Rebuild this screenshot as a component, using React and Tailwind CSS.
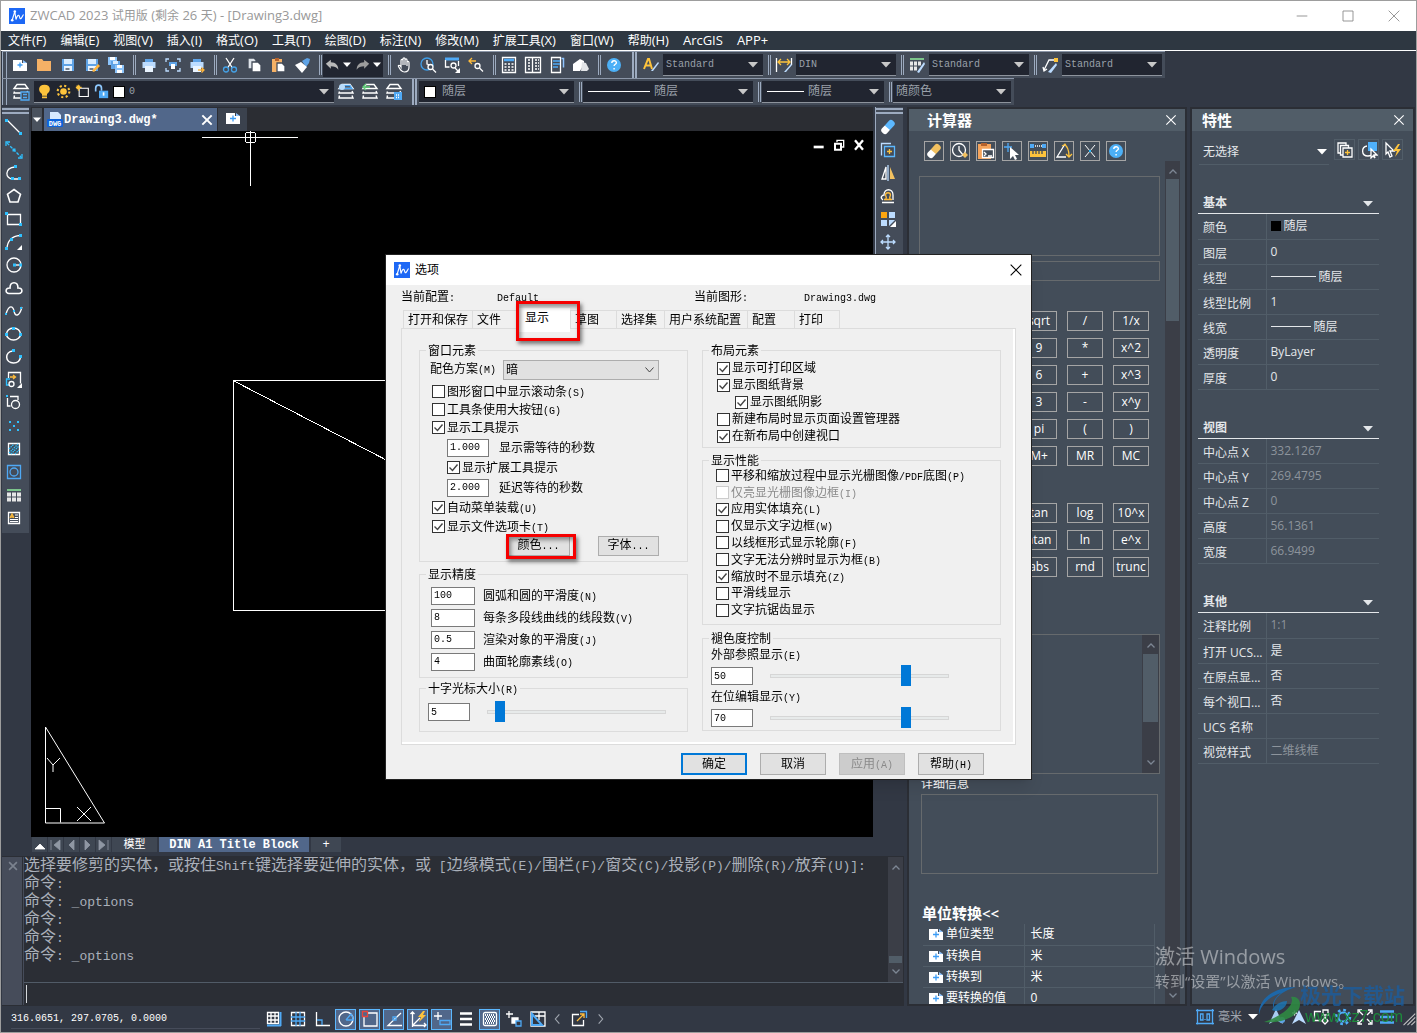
import React from "react";

const SONG = "font-['Liberation_Mono','Noto_Sans_CJK_SC',monospace]";
const UI = "font-['Open_Sans','Noto_Sans_CJK_SC',sans-serif]";

// Mixed text: latin runs get their own size next to the Chinese characters
const Song = ({ text, latin = "text-[10px]" }) =>
  text.split(/([\x20-\x7e]+)/).map((part, i) =>
    i % 2 ? (
      <span key={i} className={`whitespace-pre ${latin}`}>
        {part}
      </span>
    ) : (
      part
    )
  );

const Svg = ({ size = 18, children, className = "" }) => (
  <svg
    width={size}
    height={size}
    viewBox="0 0 18 18"
    fill="none"
    stroke="#fff"
    strokeWidth="1.3"
    className={`block shrink-0 ${className}`}
    aria-hidden="true"
  >
    {children}
  </svg>
);

const Caret = ({ className = "text-[#c8c8c8]" }) => (
  <svg width="10" height="6" viewBox="0 0 10 6" className={`shrink-0 pointer-events-none ${className}`} aria-hidden="true">
    <path d="M0 0h10L5 5.5z" fill="currentColor" />
  </svg>
);

const AppLogo = () => (
  <svg width="16" height="16" viewBox="0 0 16 16" className="shrink-0" aria-hidden="true">
    <rect width="16" height="16" fill="#1d68f5" />
    <path d="M3.200 12 5.800 3.500 7 11.500C8 8 9.500 6 10.200 8s.8 3.500 1.800 2.500 1.500-2.500 2.500-4" stroke="#fff" strokeWidth="1.100" fill="none" />
    <circle cx="5.800" cy="3.500" r="1.300" fill="#fff" />
    <circle cx="3.200" cy="12.200" r="1.300" fill="#fff" />
  </svg>
);

const PlusDoc = () => (
  <Svg>
    <path d="M2 4h9v3h5v8H2z" fill="#fff" stroke="none" />
    <path d="M12 4l4 3h-4z" fill="#8fc4ff" stroke="none" />
    <path d="M9 6.500v6M6 9.500h6" stroke="#3c9cf5" />
  </Svg>
);

const floppy = (
  <>
    <path d="M3 3h12v12H3z" fill="#5fa3e6" stroke="none" />
    <path d="M5 3h8v5H5z" fill="#d8ecff" stroke="none" />
    <path d="M5 10h8v5H5z" fill="#e9f4ff" stroke="none" />
    <path d="M6.500 13h4" stroke="#35404e" />
  </>
);

const printer = (
  <>
    <path d="M5 3h8v4H5z" fill="#5fa3e6" stroke="none" />
    <path d="M2.500 6h13v6h-13z" fill="#bcdcff" stroke="none" />
    <path d="M5 10h8v6H5z" fill="#e9f4ff" stroke="none" />
  </>
);

const layers = <path d="M5 1.500h8l3 4H2zM2.500 8.500 2 10h14l-1-2M2.500 12.500 2 15h14l-1-2.500" strokeWidth="1.400" />;

const fileIcons = [
  [
    "新建",
    <g key="a">
      <path d="M2 4h9v3h5v8H2z" fill="#fff" stroke="none" /><path d="M12 4l4 3h-4z" fill="#8fc4ff" stroke="none" />
      <path d="M9 6.500v5M6.500 9h5" stroke="#3c9cf5" />
    </g>,
  ],
  ["打开", <path key="a" d="M2 3h5l1.500 2H16v10H2z" fill="#f5b166" stroke="none" />],
  ["保存", floppy],
  ["另存为", <g key="a">{floppy}<path d="M9 15l6-7 2 2-6 6z" fill="#ffb53c" stroke="none" /></g>],
  [
    "全部保存",
    <g key="a" stroke="none">
      <path d="M1 1h9v8H1z" fill="#8cc4fb" /><path d="M3 1h5v3H3z" fill="#fff" />
      <path d="M4 5h9v8H4z" fill="#5fa3e6" /><path d="M6 5h5v3H6z" fill="#d8ecff" />
      <path d="M8 9h9v8H8z" fill="#8cc4fb" /><path d="M10 9h5v3h-5zM10 14h5v3h-5z" fill="#fff" />
    </g>,
  ],
];

const printIcons = [
  ["打印", printer],
  [
    "打印预览",
    <g key="a">
      <path d="M2 6V3h3M13 3h3v3M16 12v3h-3M5 15H2v-3" stroke="#bcdcff" />
      <path d="M5 6h8v4H5z" fill="#5fa3e6" stroke="none" /><path d="M7 8h4v5H7z" fill="#fff" stroke="none" />
    </g>,
  ],
  ["发布", <g key="a">{printer}<path d="M10 14h6M13.500 11.500 16 14l-2.500 2.500" stroke="#ffb53c" /></g>],
];

const editIcons = [
  [
    "剪切",
    <g key="a">
      <path d="M5 2l6.500 10M13 2 6.500 12" /><circle cx="5" cy="13.500" r="2.500" stroke="#45a3e8" /><circle cx="13" cy="13.500" r="2.500" stroke="#45a3e8" />
    </g>,
  ],
  ["复制", <g key="a"><path d="M3 2h6l2 2v9H3z" fill="#dfe4ea" stroke="#444c59" /><path d="M7 6h6l3 3v7H7z" fill="#fff" stroke="#444c59" /></g>],
  ["粘贴", <g key="a"><path d="M3 3h10v13H3z" fill="#f5b166" stroke="none" /><path d="M6 2h4v3H6z" fill="#b5622d" stroke="none" /><path d="M8 7h5l3 3v6H8z" fill="#fff" stroke="#444c59" /></g>],
  ["特性匹配", <g key="a" stroke="none"><path d="M9 5l5-3 3 1-1 4-3 4z" fill="#5fa3e6" /><path d="M2 9l6-3 6 5-5 6z" fill="#fff" /></g>],
];

const viewIcons = [
  [
    "平移",
    <path key="a" d="M6 11V4.500c0-1.500 2-1.500 2 0V9V3c0-1.500 2-1.500 2 0v6V4c0-1.500 2-1.500 2 0v6-3.500c0-1.500 2-1.500 2 0V11c0 3-1.500 5-4.500 5-3 0-4-2-6-5.500C3 9 4.500 8.500 6 11z" strokeWidth="1.200" />,
  ],
  ["实时缩放", <g key="a"><circle cx="8" cy="8" r="6" stroke="#3f9ee8" /><path d="M8 4v4l3 1" /><circle cx="11.500" cy="11" r="2.500" fill="#444c59" /><path d="m13.500 13 3.500 3.500" /></g>],
  ["窗口缩放", <g key="a"><path d="M2 3h14" stroke="#4fa9f5" strokeWidth="3" /><path d="M2.500 4v7h4M15.500 5v5" /><circle cx="10.500" cy="9.500" r="2.500" /><path d="m12 12 3 3" /><path d="M17 12v5h-5z" fill="#fff" stroke="none" /></g>],
  ["缩放上一个", <g key="a"><path d="M2 5h7M5 2 2 5l3 3" stroke="#fdbb3c" /><circle cx="10.500" cy="10" r="2.500" /><path d="m12.500 12 3.500 3.500" /></g>],
];

const paletteIcons = [
  ["计算器", <g key="a"><path d="M2.500 1.500h13v15h-13z" /><path d="M4 4h10" stroke="#4fa9f5" strokeWidth="2.500" /><path d="M4.500 8h9M4.500 11h9M4.500 14h9" strokeDasharray="2 1.500" /></g>],
  ["设计中心", <g key="a"><path d="M1.500 1.500h15v15h-15zM8.500 2v14" /><path d="M4 4h3M4 7h3M4 10h3M4 13h3M11 4h4M11 7h4M11 10h4M11 13h4" strokeDasharray="2 1" /></g>],
  ["工具选项板", <g key="a"><path d="M3.500 1.500h9v15h-9z" /><path d="M5 5h7M5 8h7M5 11h5" stroke="#4fa9f5" /><path d="M13.500 2.500h2v9" stroke="#8fc4ff" strokeWidth="1.500" /></g>],
  ["清理", <g key="a" stroke="none"><path d="M1 8 8 3l4 2v3l-4 7H1z" fill="#fff" /><path d="M10 6l4 1 3 6-2 2H9z" fill="#e3e5e8" /></g>],
];

const help = (
  <>
    <circle cx="9" cy="9" r="7" fill="#4cb0f7" stroke="none" />
    <path d="M6.800 7c0-3 4.600-3 4.600-.3 0 1.600-2.300 1.600-2.300 3.300M9.100 12v1.500" strokeWidth="1.400" />
  </>
);

const sq = "#2fc1ff";
const Dot = ({ x, y, fill = sq, s = 3 }) => <rect x={x} y={y} width={s} height={s} fill={fill} stroke="none" />;

const drawIcons = [
  ["直线", <g key="a"><path d="m2 2 14 14" /><Dot x="0" y="1" /><Dot x="14" y="14" /></g>],
  ["构造线", <g key="a"><path d="m2 2 14 14" stroke={sq} strokeDasharray="3 1.500" /><path d="M1 5V1h4M17 13v4h-4" stroke={sq} /><Dot x="7.500" y="7.500" /></g>],
  ["多段线", <g key="a"><path d="M10 3C-1 4 0 15 8 15h6" /><Dot x="9" y="1" /><Dot x="13" y="13" /><Dot x="6" y="13" /></g>],
  ["正多边形", <path key="a" d="m9 2.500 6.500 4.700L13 15H5L2.500 7.200z" strokeWidth="1.600" />],
  ["矩形", <g key="a"><path d="M2.500 4.500h13v10h-13z" /><Dot x="0" y="2" /><Dot x="14" y="13" /></g>],
  ["圆弧", <g key="a"><path d="M2 16C2 8 7 3 15 2.500" /><Dot x="14" y="1" /><Dot x="5" y="5" /><Dot x="0" y="14" /><path d="M17 12v5h-5z" fill="#fff" stroke="none" /></g>],
  ["圆", <g key="a"><circle cx="9" cy="9" r="7" /><path d="M9 9h6" /><Dot x="8" y="7.500" /><Dot x="14" y="7.500" /></g>],
  ["修订云线", <path key="a" d="M4 14.500c-4 0-4-6 1-5.500 0-7 8-7 8 0 5-.5 5 5.500 1 5.500z" strokeWidth="1.600" />],
  ["样条曲线", <g key="a"><path d="M1 12c3-10 7-8 8-3s5 7 8-4" /><Dot x="0" y="11" s={2} /><Dot x="8" y="8" s={2} /><Dot x="15" y="5" s={2} /></g>],
  ["椭圆", <g key="a"><ellipse cx="8.500" cy="9" rx="7" ry="6" strokeWidth="1.500" /><Dot x="7" y="2" /><Dot x="0" y="8" /><Dot x="14" y="8" /></g>],
  ["椭圆弧", <g key="a"><path d="M8 3C-1 4 0 15 8.500 15c4 0 6.500-2 7-6" strokeWidth="1.500" /><Dot x="7" y="1" /><Dot x="14" y="7" /></g>],
  ["插入块", <g key="a"><path d="M3.500 7V1.500h12v11" /><path d="M5 8H1.500v6H5" stroke={sq} /><path d="M5 6h5M8 4l2.500 2L8 8" stroke="#fdbb3c" /><circle cx="6.500" cy="13" r="2.500" /><path d="M17 12v5h-5z" fill="#fff" stroke="none" /></g>],
  ["创建块", <g key="a"><path d="M2.500 4v8h3M5 2.500h8V6" /><circle cx="10.500" cy="10.500" r="4" /><Dot x="1" y="1" s={2} /></g>],
  ["点", <g key="a"><Dot x="4" y="4" s={2} /><Dot x="12" y="4" s={2} /><Dot x="8" y="8" s={2} /><Dot x="4" y="12" s={2} /><Dot x="12" y="12" s={2} /></g>],
  ["图案填充", <g key="a"><path d="M3.500 3.500h11v11h-11z" /><path d="m4 9 5-5M4 13l9-9M6 14l8-8M10 14l4-4" stroke={sq} strokeDasharray="1.500 .8" /></g>],
  ["面域", <g key="a" stroke="#4fa9f5"><path d="M2.500 2.500h13v13h-13z" /><circle cx="9" cy="9" r="4" /></g>],
  ["表格", <g key="a"><path d="M2 4h14" stroke="#7cc48b" strokeWidth="2" /><path d="M2 8.500h14M2 13.500h14" stroke="#e6e6e6" strokeWidth="4" strokeDasharray="4 1" /></g>],
  ["多行文字", <g key="a"><path d="M3.500 3.500h11v11h-11z" /><path d="m5 9 2-4 2 4M5.500 8h3" stroke="#fdbb3c" /><path d="M10 6h3M10 8.500h3M5 10.500h8M5 12.500h8" strokeWidth="1" /></g>],
];

const eraser = (color) => (
  <g stroke="none" transform="rotate(-48 9 9)">
    <rect x="1" y="5.500" width="9" height="7" rx="3" fill="#fff" />
    <path d="M8 5.500h6a3 3 0 0 1 3 3v1a3 3 0 0 1-3 3H8z" fill={color} />
  </g>
);

const modifyIcons = [
  ["删除", eraser("#5cb8ff")],
  ["复制对象", <g key="a" stroke="#5cb8ff"><path d="M12 2.500H2.500v12" stroke="#bcdcff" /><path d="M5.500 5.500h10v10h-10z" /><path d="M10.500 8v5M8 10.500h5" stroke="#fdc33c" /></g>],
  ["镜像", <g key="a"><path d="M7 3v12H3z" /><path d="M9 1v16" stroke="#bcdcff" /><path d="M11 3v12h5z" fill="#f2c160" stroke="none" /></g>],
  ["偏移", <g key="a"><path d="M3 15.500h12M4 13c-4-3 0-5 1-5 0-7 9-7 9 0v5" /><path d="M5 12.500h8M6.500 12c2-1 0-3 0-4 0-3 5-3 5 0 0 1-2 3 0 4" stroke="#fdbb3c" /></g>],
  ["阵列", <g key="a" stroke="none"><path d="M2 2h6v6H2z" fill="#fda50f" /><path d="M10 2h6v6h-6zM2 10h6v6H2z" fill="#bcdcff" /><path d="M10 10h6l-6 6z" fill="#bcdcff" /><path d="M17 11v6h-6z" fill="#fff" /></g>],
  ["移动", <path key="a" d="M9 2v14M2 9h14M7 4l2-2 2 2M7 14l2 2 2-2M4 7 2 9l2 2M14 7l2 2-2 2" stroke="#bcdcff" />],
];

const calcIcons = [
  ["清除", eraser("#f2c160")],
  ["清除历史", <g key="a"><circle cx="8" cy="8" r="6.500" /><path d="M8 4v4l4 5" /><path d="M11 13l3-3 3 3-3 3z" fill="#f2c160" stroke="none" /></g>],
  ["粘贴到命令行", <g key="a"><path d="M1 2h13v15H1z" fill="#f5a45c" stroke="none" /><path d="M4 1h6v3H4z" fill="#b5622d" stroke="none" /><path d="M5.500 7.500h11v8h-11z" fill="#434d59" /><path d="m7 10 2 2-2 2M11 14h4" /></g>],
  ["获取坐标", <g key="a"><path d="M5 1v9M1 5h8" stroke="#4fa9f5" /><path d="m7 5 9 8h-4l2 4-2 1-2-4-3 3z" fill="#fff" stroke="none" /></g>],
  ["距离", <g key="a"><path d="M4 4h10" strokeDasharray="1 1" /><Dot x="1" y="2" fill="#4fa9f5" s={4} /><Dot x="13" y="2" fill="#4fa9f5" s={4} /><path d="M1 9h16v6H1z" fill="#fdc33c" stroke="none" /><path d="M4 12V9M7 12V9M10 12V9M13 12V9" stroke="#434d59" /></g>],
  ["角度", <g key="a"><path d="M10 2 2 15h9" /><path d="M9 2c3 2 5 7 5 12M7 4l4-2M11 12l3 3 3-3" stroke="#fdc33c" /></g>],
  ["交点", <g key="a"><path d="m4 3 10 12M14 3 4 15" strokeWidth="1" /><Dot x="8" y="8" s={2} /></g>],
  ["帮助", help],
];

const keypad = [
  "C", "<--", "sqrt", "/", "1/x",
  "7", "8", "9", "*", "x^2",
  "4", "5", "6", "+", "x^3",
  "1", "2", "3", "-", "x^y",
  "0", ".", "pi", "(", ")",
  "=", "MS", "M+", "MR", "MC",
];
const sciPad = ["sin", "cos", "tan", "log", "10^x", "asin", "acos", "atan", "ln", "e^x", "r2d", "d2r", "abs", "rnd", "trunc"];

const IconButton = ({ label, children, className = "h-6 w-6" }) => (
  <button type="button" aria-label={label} className={`flex shrink-0 items-center justify-center ${className}`}>
    <Svg>{children}</Svg>
  </button>
);

const IconGroup = ({ items }) => items.map(([label, icon]) => <IconButton key={label} label={label}>{icon}</IconButton>);

const Grip = () => <span className="ml-[5px] mr-px h-5 w-[3px] shrink-0 border-x border-[#9dabc0]" />;
const WideGrip = () => <span className="ml-[6px] mr-[2px] h-[26px] w-[5px] shrink-0 border-x-2 border-[#9dabc0]" />;

const Combo = ({ label, value, width, lead, color = "text-[#9aa0aa]", latin }) => (
  <span className={`flex h-[22px] shrink-0 items-center gap-1 border-b border-[#8d939c] bg-[#212530] pl-[3px] pr-[5px] ${width}`}>
    {lead}
    <select aria-label={label} className={`min-w-0 flex-1 appearance-none bg-transparent leading-4 outline-none ${latin ? "text-[10px]" : "text-xs"} ${color}`}>
      <option>{value}</option>
    </select>
    <Caret />
  </span>
);

const menus = ["文件(F)", "编辑(E)", "视图(V)", "插入(I)", "格式(O)", "工具(T)", "绘图(D)", "标注(N)", "修改(M)", "扩展工具(X)", "窗口(W)", "帮助(H)", "ArcGIS", "APP+"];

const Toolbars = () => (
  <div className={SONG}>
    <div className="flex h-[27px] w-fit items-center border-t border-[#8b96a8] bg-[#444c59] pr-[3px]">
      <span className="mr-px h-[26px] w-[5px] shrink-0 border-x border-[#9dabc0]" />
      <IconGroup items={fileIcons} />
      <Grip />
      <IconGroup items={printIcons} />
      <Grip />
      <IconGroup items={editIcons} />
      <Grip />
      <div className="flex h-[23px] w-[60px] items-center justify-around bg-[#212530]">
        <button type="button" aria-label="放弃"><Svg size={15}><path d="M1 7l6-5v3c6 0 9 4 9 9-2-3-5-4-9-4v3z" fill="#b9b9b9" stroke="none" /></Svg></button>
        <Caret className="w-2 text-white" />
        <button type="button" aria-label="重做"><Svg size={15}><path d="m17 7-6-5v3c-6 0-9 4-9 9 2-3 5-4 9-4v3z" fill="#9d9d9d" stroke="none" /></Svg></button>
        <Caret className="w-2 text-white" />
      </div>
      <Grip />
      <IconGroup items={viewIcons} />
      <Grip />
      <IconGroup items={paletteIcons} />
      <Grip />
      <IconButton label="帮助">{help}</IconButton>
      <WideGrip />
      <IconButton label="文字样式"><path d="M2 13 6 3h1l3 10M3.500 9.500h6" stroke="#fdc33c" strokeWidth="2" /><path d="m9 15 7-9 1 1-6 8z" fill="#bcdcff" stroke="none" /></IconButton>
      <Combo label="文字样式" value="Standard" width="w-[100px]" latin />
      <Grip />
      <IconButton label="标注样式"><path d="M1.500 2v14M16.500 2v7" /><path d="M3 6h12M6 3 3 6l3 3M12 3l3 3-3 3" stroke="#fdc33c" /><path d="m9 16 7-8 1 1-6 7z" fill="#bcdcff" stroke="none" /></IconButton>
      <Combo label="标注样式" value="DIN" width="w-[100px]" latin />
      <Grip />
      <IconButton label="表格样式"><path d="M2 3h14" stroke="#7cc48b" strokeWidth="2" /><path d="M2 7.500h12M2 12.500h8" stroke="#e6e6e6" strokeWidth="4" strokeDasharray="3 1" /><path d="m9 16 7-10 1 2-6 9z" fill="#bcdcff" stroke="none" /></IconButton>
      <Combo label="表格样式" value="Standard" width="w-[100px]" latin />
      <Grip />
      <IconButton label="多重引线样式"><path d="M13 4H8L3 14M2 11l1 4 3-2" /><Dot x="13" y="2" s={4} fill="#fdc33c" /><path d="m7 16 8-9 1 2-6 8z" fill="#bcdcff" stroke="none" /></IconButton>
      <Combo label="多重引线样式" value="Standard" width="w-[100px]" latin />
    </div>
    <div className="flex h-[27px] w-fit items-center border-t border-[#8b96a8] bg-[#444c59] pr-[3px]">
      <span className="mr-px h-[26px] w-[5px] shrink-0 border-x border-[#9dabc0]" />
      <IconButton label="图层特性" className="h-6 w-[26px]">{layers}<path d="M9 9h8v8H9z" fill="#444c59" stroke="#4fa9f5" /><path d="M11 11.500h4M11 14.500h4" stroke="#4fa9f5" /></IconButton>
      <Combo
        label="图层"
        value="0"
        latin
        width="w-[300px]"
        lead={
          <>
            <Svg size={15}><path d="M9 1c-8 0-8 8-3 11v2h6v-2c5-3 5-11-3-11zM6 15h6v2H6z" fill="#fdc33c" stroke="none" /></Svg>
            <Svg size={15}><circle cx="9" cy="9" r="4" fill="#fdc33c" stroke="none" /><circle cx="9" cy="9" r="7" stroke="#fdc33c" strokeWidth="2.500" strokeDasharray="2.500 3" /></Svg>
            <Svg size={15}><path d="M5 5h11v10H5z" /><path d="M4 1v7M1 4h7M2 2l4 4M6 2 2 6" stroke="#fdc33c" /></Svg>
            <Svg size={15}><path d="M2 9V5c0-5 7-5 7 0v3" stroke="#8fc9ff" strokeWidth="2" /><path d="M6 8h11v9H6z" fill="#4fa9f5" stroke="none" /><path d="M11.500 10v4" strokeWidth="2" /></Svg>
            <span className="size-3 border border-black bg-white" />
          </>
        }
      />
      <IconButton label="置为当前">{layers}<path d="M5 2.500h8l2 3H3z" stroke="#4fa9f5" /><circle cx="5" cy="4" r="3" fill="#b9dcfb" stroke="none" /></IconButton>
      <IconButton label="上一个图层">{layers}<path d="M2 4h7M5 1 2 4l3 3" stroke="#63d27a" /></IconButton>
      <IconButton label="图层状态">{layers}<path d="M9 9h8v8H9z" fill="#4fa9f5" stroke="none" /><path d="M11 12h4M11 14.500h4" stroke="#fff" strokeDasharray="1 1" /></IconButton>
      <WideGrip />
      <Combo label="颜色" value="随层" width="w-[155px]" lead={<span className="mx-0.5 size-3 border border-black bg-white" />} />
      <Grip />
      <Combo label="线型" value="随层" width="w-[170px]" lead={<span className="ml-0.5 h-px w-[62px] bg-white" />} />
      <Grip />
      <Combo label="线宽" value="随层" width="w-[122px]" lead={<span className="ml-0.5 h-px w-[37px] bg-white" />} />
      <Grip />
      <Combo label="打印样式" value="随颜色" width="w-[118px]" />
    </div>
  </div>
);

const SideTools = ({ items }) => (
  <div className="flex w-[27px] shrink-0 flex-col self-start bg-[#444c59] pb-1">
    <span className="mb-px mt-px h-[6px] w-full shrink-0 border-y-2 border-[#9dabc0]" />
    {items.map(([label, icon]) => (
      <IconButton key={label} label={label} className="h-[23px] w-6">{icon}</IconButton>
    ))}
  </div>
);

const layoutNav = [
  ["展开", "M2 11h10L7 6z", "#fff"],
  ["第一个", "M2 2v10M11 2v10L5 7z", "#8f97a3"],
  ["上一个", "M9 2v10L4 7z", "#8f97a3"],
  ["下一个", "M4 2v10l5-5z", "#8f97a3"],
  ["最后一个", "M11 2v10M2 2v10l6-5z", "#8f97a3"],
];

const Canvas = () => (
  <div className="flex min-w-0 flex-1 flex-col">
    <div className="flex h-6 shrink-0 items-end gap-0.5 bg-[#2b2d33] pl-px">
      <button type="button" aria-label="文件列表" className="flex h-[23px] w-2.5 items-center justify-center bg-[#4a525e]">
        <Caret className="w-2 text-white" />
      </button>
      <div className="flex h-[23px] w-[173px] items-center bg-[#51678a] pl-0.5 pr-1 text-white">
        <Svg>
          <path d="M4 1h8l3 3v12H4z" fill="#d7e9ff" stroke="none" />
          <rect x="1" y="8" width="16" height="8" rx="1" fill="#0d63dc" stroke="none" />
          <text x="9" y="14.500" textAnchor="middle" fontSize="7" fontWeight="bold" fill="#fff" stroke="none">DWG</text>
        </Svg>
        <span className="flex-1 text-xs font-bold">Drawing3.dwg*</span>
        <button type="button" aria-label="关闭"><Svg size={12}><path d="m2 2 14 14M16 2 2 16" strokeWidth="3" /></Svg></button>
      </div>
      <button type="button" aria-label="新建图形" className="-ml-px flex h-[23px] w-[29px] items-center justify-center bg-[#3b424e] pb-1">
        <PlusDoc />
      </button>
    </div>
    <div className="relative min-h-0 flex-1 overflow-hidden bg-black">
      <svg className="absolute inset-0 h-full w-full" fill="none" stroke="#fff" shapeRendering="crispEdges" aria-hidden="true">
        <path d="M171 6.500h96M219.500 0v55" />
        <rect x="214.500" y="1.500" width="10" height="10" rx="2" />
        <path d="M602 249.500H202.500v230H602" />
        <path d="M202 249.500 602 457" />
      </svg>
      <svg className="absolute bottom-3 left-3" width="64" height="100" fill="none" stroke="#fff" aria-hidden="true">
        <path d="M2.500 2v96h59zM2.500 83.500h15v14" />
        <path d="m4 33 6 7 7-7M10 40v7M34 82l14 14M48 82 34 96" />
      </svg>
      <div className="relative flex justify-end gap-2 pr-2 pt-2">
        <button type="button" aria-label="最小化"><Svg size={12}><path d="M1 12h15" strokeWidth="4" /></Svg></button>
        <button type="button" aria-label="还原"><Svg size={12}><path d="M6 5V2h10v10h-3" strokeWidth="2" /><path d="M3 7h9v9H3z" strokeWidth="3" /></Svg></button>
        <button type="button" aria-label="关闭图形"><Svg size={12}><path d="m3 2 12 14M15 2 3 16" strokeWidth="3.500" /></Svg></button>
      </div>
    </div>
    <div className="flex h-[15px] shrink-0 items-stretch pl-px text-white">
      <div className="flex gap-px">
        {layoutNav.map(([label, d, color]) => (
          <button key={label} type="button" aria-label={label} className="flex w-[15px] items-center justify-center bg-[#3f4753]">
            <svg width="14" height="14" aria-hidden="true"><path d={d} fill={color} stroke={color} strokeWidth=".8" /></svg>
          </button>
        ))}
      </div>
      <button type="button" className="ml-px w-[45px] bg-[#3f4753] text-[11px] leading-[14px]">模型</button>
      <button type="button" className="ml-0.5 w-[150px] bg-[#51678a] text-xs font-bold leading-[14px]">DIN A1 Title Block</button>
      <button type="button" className="ml-0.5 w-[30px] bg-[#3f4753] text-xs leading-[14px]">+</button>
    </div>
  </div>
);

const Chevron = ({ up }) => (
  <svg width="8" height="5" viewBox="0 0 8 5" fill="none" stroke="#7d8794" strokeWidth="1.300" className="shrink-0" aria-hidden="true">
    <path d={up ? "M.5 4.500 4 1l3.500 3.500" : "M.5.5 4 4 7.500.5"} />
  </svg>
);

const logLines = [
  "选择要修剪的实体，或按住Shift键选择要延伸的实体，或 [边缘模式(E)/围栏(F)/窗交(C)/投影(P)/删除(R)/放弃(U)]:",
  "命令:",
  "命令: _options",
  "命令:",
  "命令:",
  "命令: _options",
];

const CommandPanel = () => (
  <div className="mt-1 flex h-[150px] shrink-0 border border-l-0 border-[#2b2e35] bg-[#2b2e35] text-[#aab0ba]">
    <div className="w-5 shrink-0 bg-[#464c5a] pl-1.5 pt-1">
      <button type="button" aria-label="关闭命令行" className="block"><Svg size={10}><path d="m2 2 14 14M16 2 2 16" stroke="#7b828e" strokeWidth="3" /></Svg></button>
    </div>
    <div className="ml-px flex min-w-0 flex-1 flex-col border-l border-[#464c5a]">
      <div className="flex h-[126px] border-b border-[#515b67]">
        <div className="min-w-0 flex-1 overflow-hidden whitespace-nowrap text-base leading-[18px]">
          {logLines.map((line, i) => (
            <p key={i} className="h-[18px]"><Song text={line} latin="text-[13px]" /></p>
          ))}
        </div>
        <div className="flex w-[15px] flex-col items-center justify-between bg-[#3b3e47] py-2">
          <Chevron up />
          <span className="mb-1.5 mt-auto h-[7px] w-[13px] bg-[#515d68]" />
          <Chevron />
        </div>
      </div>
      <div className="flex flex-1 items-center pl-0.5">
        <span className="h-[18px] w-px bg-[#d5d8dc]" />
        <input aria-label="命令" className="min-w-0 flex-1 bg-transparent px-1 outline-none" />
      </div>
    </div>
  </div>
);

const PanelHeader = ({ title, pad }) => (
  <div className="flex h-[22px] shrink-0 items-center justify-between bg-[#515d68] pr-2 text-white">
    <h2 className={`text-[15px] font-semibold leading-5 ${pad}`}>{title}</h2>
    <button type="button" aria-label={`关闭${title}`}><Svg size={12}><path d="m2 2 14 14M16 2 2 16" strokeWidth="1.700" /></Svg></button>
  </div>
);

const KeyGrid = ({ keys }) => (
  <div className="grid grid-cols-[repeat(5,36px)] justify-end gap-x-2.5 gap-y-[7px] pr-[11px]">
    {keys.map((k) => (
      <button key={k} type="button" className="h-5 border border-[#a5a5a5] text-xs leading-[18px]">{k}</button>
    ))}
  </div>
);

const units = [
  ["单位类型", "长度"],
  ["转换自", "米"],
  ["转换到", "米"],
  ["要转换的值", "0"],
];

const Calculator = () => (
  <section className="ml-[3px] flex w-[280px] shrink-0 flex-col border-2 border-[#2b2e35] bg-[#434d59] text-white">
    <PanelHeader title="计算器" pad="pl-[18px]" />
    <div className="mt-2.5 flex shrink-0 gap-1.5 pl-[15px]">
      {calcIcons.map(([label, icon]) => (
        <IconButton key={label} label={label} className="size-5 border border-[#a5a5a5]">{icon}</IconButton>
      ))}
    </div>
    <div className="flex min-h-0 flex-1">
      <div className="min-w-0 flex-1 overflow-hidden pl-2.5 pr-[5px]">
        <div className="mt-[15px] h-20 border border-[#666a6d]" />
        <input aria-label="表达式" className="mt-[5px] block h-5 w-full border border-[#666a6d] bg-transparent px-1 text-xs" />
        <div className="mt-[30px]"><KeyGrid keys={keypad} /></div>
        <div className="mt-[37px]"><KeyGrid keys={sciPad} /></div>
        <div className="mt-[57px] flex h-[140px] justify-end border border-[#666a6d]">
          <div className="flex w-[17px] flex-col items-center bg-[#3b3e47] py-2">
            <Chevron up />
            <span className="mt-1.5 h-[68px] w-[15px] shrink-0 bg-[#515d68]" />
            <span className="flex-1" />
            <Chevron />
          </div>
        </div>
        <p className="mt-0.5 pl-0.5 text-xs leading-4">详细信息</p>
        <div className="ml-0.5 mr-0.5 mt-0.5 h-20 border border-[#666a6d]" />
        <h3 className="mt-7 pl-[3px] text-[15px] font-semibold leading-[22px]">单位转换&lt;&lt;</h3>
        <table className="ml-1 w-[232px] table-fixed border-collapse text-xs">
          <tbody>
            {units.map(([name, value]) => (
              <tr key={name} className="h-[21px]">
                <th scope="row" className="w-[101px] border-b border-r border-[#515d68] p-0 pl-1 text-left font-normal leading-4">
                  <span className="flex items-center gap-px"><PlusDoc />{name}</span>
                </th>
                <td className="border-b border-r border-[#515d68] p-0 pl-1.5 leading-4">{value}</td>
              </tr>
            ))}
          </tbody>
        </table>
      </div>
      <div className="mr-[5px] flex w-[15px] shrink-0 flex-col items-center bg-[#3b3e47] pb-1.5 pt-2">
        <Chevron up />
        <span className="mt-[5px] h-[142px] w-[13px] bg-[#515d68]" />
        <span className="flex-1" />
        <Chevron />
      </div>
    </div>
  </section>
);

const Line = ({ width }) => <span className={`h-px bg-[#e4e7ea] ${width}`} />;

const sections = [
  {
    title: "基本",
    rows: [
      ["颜色", "随层", <span key="s" className="size-2.5 bg-black" />],
      ["图层", "0"],
      ["线型", "随层", <Line key="s" width="w-[45px]" />],
      ["线型比例", "1"],
      ["线宽", "随层", <Line key="s" width="w-10" />],
      ["透明度", "ByLayer"],
      ["厚度", "0"],
    ],
  },
  {
    title: "视图",
    muted: true,
    rows: [["中心点 X", "332.1267"], ["中心点 Y", "269.4795"], ["中心点 Z", "0"], ["高度", "56.1361"], ["宽度", "66.9499"]],
  },
  {
    title: "其他",
    rows: [["注释比例", "1:1"], ["打开 UCS...", "是"], ["在原点显...", "否"], ["每个视口...", "否"], ["UCS 名称", ""], ["视觉样式", "二维线框"]],
  },
];
const readOnly = ["1:1", "二维线框"];

const Properties = () => (
  <section className="ml-[3px] mr-px flex w-[225px] shrink-0 flex-col border-2 border-[#2b2e35] bg-[#434d59] text-xs text-[#e4e7ea]">
    <PanelHeader title="特性" pad="pl-2.5" />
    <div className="ml-[7px] mt-2 flex items-start gap-[5px]">
      <label className="flex h-[26px] w-[130px] items-center border-b border-[#515d68] pl-1 pr-0.5">
        <select aria-label="选择对象" className="min-w-0 flex-1 appearance-none bg-transparent outline-none">
          <option>无选择</option>
        </select>
        <Caret className="text-white" />
      </label>
      <div className="flex gap-[3px]">
        <IconButton label="切换选择方式" className="size-[21px] border border-[#515d68]"><path d="M5 12H2V2h8v3M7 14H4.500V4.500h8V7M7 7h9v9H7z" /><path d="M11.500 9v5M9 11.500h5" stroke="#fdc33c" /></IconButton>
        <IconButton label="选择对象" className="size-[21px] border border-[#515d68]"><path d="M8 1h9v9H8z" fill="#4fb0fa" stroke="none" /><path d="M7 5c-6 1-6 10 1 10 3 0 4-1 5-3" /><path d="m11 8 6 6h-3l1 3-2-2-2 2z" fill="#434d59" /></IconButton>
        <IconButton label="快速选择" className="size-[21px] border border-[#515d68]"><path d="m2 2 8 8H6l2 5-2 1-2-5-2 2z" /><path d="m14 3-5 7h4l-2 6 6-8h-4l3-5z" fill="#fdc33c" stroke="none" /></IconButton>
      </div>
    </div>
    {sections.map((s) => (
      <div key={s.title} className="ml-1.5 w-[181px]">
        <h3 className="flex h-[49px] items-end justify-between border-b border-[#e4e7ea] pb-px pl-[5px] pr-1.5 font-bold leading-[18px]">
          {s.title}
          <button type="button" aria-label={`折叠${s.title}`} className="pb-[5px]"><Caret className="text-[#e4e7ea]" /></button>
        </h3>
        <table className="w-full table-fixed border-collapse">
          <tbody>
            {s.rows.map(([name, value, lead]) => (
              <tr key={name} className="h-[25px] border-b border-[#515d68]">
                <th scope="row" className="w-[68px] whitespace-nowrap border-r border-[#515d68] p-0 pl-[5px] pt-1 text-left font-normal leading-5">{name}</th>
                <td className={s.muted || readOnly.includes(value) ? "p-0 pl-1 leading-5 text-[#8d949c]" : "p-0 pl-1 leading-5"}>
                  <span className="flex items-center gap-[3px]">{lead}{value}</span>
                </td>
              </tr>
            ))}
          </tbody>
        </table>
      </div>
    ))}
  </section>
);

const modes = [
  ["捕捉", false, <g key="a"><path d="M2.500 2.500h11v11h-11zM6 2v12M10 2v12M2 6h12M2 10h12" /><path d="M15.500 2v14M2 15.500h14" stroke="#4fa9f5" strokeWidth="2" /></g>],
  ["栅格", false, <g key="a"><path d="M2.500 2.500h13v13h-13z" /><path d="M7 2v14M11 2v14M2 7h14M2 11h14" stroke="#4fa9f5" /></g>],
  ["正交", false, <g key="a"><path d="M3.500 2v13.500H17" /><path d="M4 10h5v5" stroke="#4fa9f5" /></g>],
  ["极轴", true, <g key="a"><circle cx="9" cy="9" r="7" /><path d="M9 10h8M9 10l5-6c2 2 2 4 2 6" stroke="#4fa9f5" /></g>],
  ["对象捕捉", true, <g key="a"><path d="M3 3h13v13H3z" /><path d="M1.500 1.500h5v5h-5z" stroke="#e8443c" fill="#51678a" /></g>],
  ["对象追踪", true, <g key="a"><path d="M16 3 3 15.500h14" /><path d="M8 7h3v3H8z" stroke="#4fa9f5" /></g>],
  ["动态UCS", true, <g key="a"><path d="M3.500 17V2M1.500 4l2-2 2 2M3 15.500h14M15 13l2 2-2 2M4 15l7-7" /><path d="m14 1-5 6h3l-2 5 7-7h-3l2-4z" fill="#fdc33c" stroke="none" /></g>],
  ["动态输入", true, <g key="a"><path d="M5 2v8M1 6h8" /><path d="M7 10.500h10v4H7z" stroke="#4fa9f5" /></g>],
  ["线宽", false, <path key="a" d="M3 3.500h12M3 9h12M3 14.500h12" strokeWidth="2.500" />],
  ["透明度", true, <g key="a"><rect x="2.500" y="2.500" width="13" height="13" rx="1.500" /><path d="M4 5h10M4 9h10M4 13h10" strokeDasharray="1 1" strokeWidth="2" /><path d="M5 7h9M5 11h9" strokeDasharray="1 1" strokeWidth="2" /></g>],
  ["循环选择", false, <g key="a"><path d="M4 1v7M1 4h7" /><path d="M7 8h6v5H7z" fill="#fff" /><path d="M11 11h5v5h-5z" fill="#323844" stroke="#4fa9f5" /></g>],
  ["注释监视器", false, <g key="a"><path d="M2 2h14v14H2zM10 2v8M6 6h10" /><path d="m3 4 10 11H3z" stroke="#4fa9f5" strokeWidth="2" /></g>],
];

const StatusBar = () => (
  <footer className="flex h-[26px] shrink-0 items-center bg-[#323844] text-white">
    <div className="ml-[10px] flex h-full w-[252px] shrink-0 items-center">
      <span className={`h-5 w-[249px] border-b border-[#464c5a] text-[10px] leading-5 ${SONG}`}>316.0651, 297.0705, 0.0000</span>
    </div>
    <div className="flex items-center gap-[3px]">
      {modes.map(([label, on, icon]) => (
        <IconButton key={label} label={label} className={on ? "size-[21px] border border-[#5cb8ff] bg-[#51678a]" : "size-[21px]"}>{icon}</IconButton>
      ))}
    </div>
    <div className="ml-1 flex items-center gap-1.5">
      <Svg size={12}><path d="m11 2-6 7 6 7" stroke="#a0a6af" strokeWidth="1.700" /></Svg>
      <Svg><path d="M9 4.500H2.500v11h11V10" /><path d="M10 1.500h6.500V8" stroke="#4fa9f5" /><path d="m7 11 7-7M10 4h4v4" stroke="#fdbb3c" /></Svg>
      <Svg size={12}><path d="m7 2 6 7-6 7" stroke="#a0a6af" strokeWidth="1.700" /></Svg>
    </div>
    <div className="ml-auto flex items-center gap-1 pb-1">
      <Svg><path d="M1.500 1v15.500M16.500 1v15.500M0 2.500h18M0 15.500h18" stroke="#4fa9f5" /><path d="M4.500 6h2.500v6H4.500zM11 6h2.500v6H11zM9 11v1" stroke="#4fa9f5" /></Svg>
      <span className="text-xs text-[#a0a6af]">毫米</span>
      <Caret className="ml-0.5 mr-1.5 text-white" />
      <Svg><path d="m8 1 7 15-7-4-7 4z" fill="#a9cdf2" stroke="none" /><circle cx="14" cy="12" r="3" fill="#5fa3e6" stroke="none" /></Svg>
      <Svg><path d="m9 2 7 14-7-4-7 4z" fill="#bcdcff" stroke="none" /><path d="M2 5h5M4.500 2.500v5" /></Svg>
      <Svg><path d="M9 12.500H2.500v-9H9M11 2h5v5h-5zM13 9l3 4-3 3-3-3z" /></Svg>
      <Svg><circle cx="9" cy="9" r="4.500" stroke="#4fb0fa" strokeWidth="2" /><circle cx="9" cy="9" r="7" stroke="#4fb0fa" strokeWidth="2.500" strokeDasharray="2.700 2.800" /></Svg>
      <Svg><path d="M2 6V2h4M12 2h4v4M16 12v4h-4M6 16H2v-4M3 3l4 4M15 3l-4 4M3 15l4-4M15 15l-4-4" /></Svg>
      <Svg><path d="M2 3.500h14M2 9h14M2 14.500h14" stroke="#4fa9f5" strokeWidth="2.500" /></Svg>
      <Svg size={14} className="ml-0.5 self-end"><path d="M2 17 17 2M7 17 17 7M12 17l5-5" stroke="#c8c8c8" /></Svg>
    </div>
  </footer>
);

/* ---------- options dialog ---------- */

const Check = ({ label, checked, disabled, className = "" }) => (
  <label className={`flex w-fit items-center gap-[2px] whitespace-nowrap leading-4 ${disabled ? "text-[#8a8a8a]" : ""} ${className}`}>
    <span className="grid shrink-0">
      <input
        type="checkbox"
        defaultChecked={checked}
        disabled={disabled}
        className="peer col-start-1 row-start-1 size-[13px] appearance-none border border-[#333] bg-white disabled:border-[#ccc]"
      />
      <svg viewBox="0 0 13 13" className="pointer-events-none invisible col-start-1 row-start-1 size-[13px] peer-checked:visible" fill="none" stroke="#444" strokeWidth="1.400" aria-hidden="true">
        <path d="m2.500 6.500 3 3 5-6" />
      </svg>
    </span>
    <span className="pt-[3px] leading-[13px]"><Song text={label} /></span>
  </label>
);

const Field = ({ id, label, value, width = "w-[42px]" }) => (
  <input id={id} aria-label={label} defaultValue={value} className={`h-[18px] shrink-0 border border-[#7a7a7a] bg-white px-0.5 text-[10px] leading-4 ${width}`} />
);

const Slider = ({ label, value }) => (
  <input
    type="range"
    aria-label={label}
    defaultValue={value}
    className="h-[21px] w-[179px] appearance-none bg-transparent [&::-webkit-slider-runnable-track]:h-[4px] [&::-webkit-slider-runnable-track]:border [&::-webkit-slider-runnable-track]:border-[#d6d6d6] [&::-webkit-slider-runnable-track]:bg-[#e7eaea] [&::-webkit-slider-thumb]:-mt-2.5 [&::-webkit-slider-thumb]:h-[21px] [&::-webkit-slider-thumb]:w-2.5 [&::-webkit-slider-thumb]:appearance-none [&::-webkit-slider-thumb]:bg-[#0078d7]"
  />
);

const Group = ({ title, children, className }) => (
  <fieldset className={`border border-[#dcdcdc] ${className}`}>
    <legend className="ml-1.5 whitespace-nowrap px-[2px] pt-[3px] leading-[11px]"><Song text={title} /></legend>
    {children}
  </fieldset>
);

const RedBox = ({ className }) => (
  <span className={`pointer-events-none absolute border-3 border-[#f50000] shadow-[2px_3px_4px_rgba(0,0,0,0.5),inset_2px_3px_4px_rgba(0,0,0,0.4)] ${className}`} />
);

const tabs = [
  ["打开和保存", "w-[69px]"],
  ["文件", "w-[45px]"],
  ["显示", "w-[53px]"],
  ["草图", "w-[46px]"],
  ["选择集", "w-[48px]"],
  ["用户系统配置", "w-[83px]"],
  ["配置", "w-[47px]"],
  ["打印", "w-[46px]"],
];

const precision = [
  ["圆弧和圆的平滑度(N)", "100"],
  ["每条多段线曲线的线段数(V)", "8"],
  ["渲染对象的平滑度(J)", "0.5"],
  ["曲面轮廓素线(O)", "4"],
];

const performance = [
  ["平移和缩放过程中显示光栅图像/PDF底图(P)"],
  ["仅亮显光栅图像边框(I)", false, true],
  ["应用实体填充(L)", true],
  ["仅显示文字边框(W)"],
  ["以线框形式显示轮廓(F)"],
  ["文字无法分辨时显示为框(B)"],
  ["缩放时不显示填充(Z)", true],
  ["平滑线显示"],
  ["文字抗锯齿显示"],
];

const btn = "border border-[#adadad] bg-[#e1e1e1] text-center";

const OptionsDialog = () => (
  <div className="pointer-events-none fixed inset-0 flex items-center justify-center">
    <div role="dialog" aria-label="选项" className={`pointer-events-auto w-[647px] border border-[#222] bg-[#f0f0f0] text-xs text-black shadow-lg ${SONG}`}>
      <div className="flex h-[30px] items-center gap-[5px] bg-white pl-2 pr-[9px]">
        <AppLogo />
        <h1 className="flex-1 pt-0.5">选项</h1>
        <button type="button" aria-label="关闭"><Svg size={12}><path d="m1 1 16 16M17 1 1 17" stroke="#000" strokeWidth="1.600" /></Svg></button>
      </div>
      <div className="flex h-[25px] items-center pl-[15px] pt-[3px] leading-4">
        <span className="w-24"><Song text="当前配置:" /></span>
        <span className="w-[197px] text-[10px]">Default</span>
        <span className="w-[110px]"><Song text="当前图形:" /></span>
        <span className="text-[10px]">Drawing3.dwg</span>
      </div>

      <div role="tablist" className="flex h-[18px] pl-[17px]">
        {tabs.map(([name, width]) =>
          name === "显示" ? (
            <div key={name} className={`relative -mb-1 -mt-0.5 bg-white ${width}`}>
              <button type="button" role="tab" aria-selected="true" className="w-full pl-2 pt-px text-left leading-5">{name}</button>
              <RedBox className="-left-px -top-[7px] z-10 h-[40px] w-[64px]" />
            </div>
          ) : (
            <button key={name} type="button" role="tab" aria-selected="false" className={`whitespace-nowrap border-l border-t border-[#dcdcdc] pl-1 pt-0.5 text-left leading-4 last:border-r ${width}`}>
              {name}
            </button>
          )
        )}
      </div>

      <div className="ml-[15px] mr-[15px] flex gap-[14px] border border-[#dcdcdc] shadow-[inset_-2px_-2px_0_#fff] pb-3 pl-[17px] pt-[15px]">
        <div className="w-[269px]">
          <Group title="窗口元素" className="h-[218px]">
            <div className="mt-0.5 flex h-5 items-center pl-2.5">
              <label htmlFor="scheme" className="w-[73px] whitespace-nowrap"><Song text="配色方案(M)" /></label>
              <span className="flex h-5 w-[156px] items-center border border-[#adadad] bg-[#e1e1e1] pl-0.5 pr-1">
                <select id="scheme" className="min-w-0 flex-1 appearance-none bg-transparent pt-0.5 leading-4 outline-none"><option>暗</option></select>
                <svg width="9" height="6" fill="none" stroke="#444" className="pointer-events-none" aria-hidden="true"><path d="M.5.5 4.500 5 8.500.5" /></svg>
              </span>
            </div>
            <div className="mt-[3px] pl-3">
              <Check label="图形窗口中显示滚动条(S)" className="h-[18px]" />
              <Check label="工具条使用大按钮(G)" className="h-[18px]" />
              <Check label="显示工具提示" checked className="h-[18px]" />
              <div className="mt-px flex h-5 items-center gap-2.5 pl-[15px]"><Field id="delay" value="1.000" /><label htmlFor="delay" className="pt-0.5">显示需等待的秒数</label></div>
              <Check label="显示扩展工具提示" checked className="ml-[15px] h-5" />
              <div className="flex h-5 items-center gap-2.5 pl-[15px]"><Field id="delay2" value="2.000" /><label htmlFor="delay2" className="pt-0.5">延迟等待的秒数</label></div>
              <Check label="自动菜单装载(U)" checked className="h-5" />
              <Check label="显示文件选项卡(T)" checked className="h-[18px]" />
            </div>
            <div className="relative flex gap-7 pl-[87px]">
              <button type="button" className={`${btn} h-5 w-[63px] leading-[19px]`}><Song text="颜色..." /></button>
              <button type="button" className={`${btn} h-5 w-[61px] leading-[19px]`}><Song text="字体..." /></button>
              <RedBox className="-top-[2px] left-[86px] h-[25px] w-[70px]" />
            </div>
          </Group>

          <Group title="显示精度" className="mt-1.5 h-[110px]">
            <div className="mt-[5px] flex flex-col gap-1 pl-[11px]">
              {precision.map(([label, value]) => (
                <div key={label} className="flex h-[18px] items-center gap-2">
                  <Field id={`precision-${value}`} value={value} width="w-11" />
                  <label htmlFor={`precision-${value}`} className="whitespace-nowrap pt-0.5"><Song text={label} /></label>
                </div>
              ))}
            </div>
          </Group>

          <Group title="十字光标大小(R)" className="mt-1 h-[50px]">
            <div className="mt-1.5 flex items-center gap-[17px] pl-2">
              <Field label="十字光标大小" value="5" />
              <Slider label="十字光标大小" value={4} />
            </div>
          </Group>
        </div>

        <div className="w-[299px]">
          <Group title="布局元素" className="h-[104px]">
            <div className="mt-0.5 pl-3.5">
              <Check label="显示可打印区域" checked className="h-[17px]" />
              <Check label="显示图纸背景" checked className="h-[17px]" />
              <Check label="显示图纸阴影" checked className="ml-[18px] h-[17px]" />
              <Check label="新建布局时显示页面设置管理器" className="h-[17px]" />
              <Check label="在新布局中创建视口" checked className="h-[17px]" />
            </div>
          </Group>

          <Group title="显示性能" className="mt-1.5 h-[171px]">
            <div className="grid h-[151px] auto-rows-fr pl-[13px]">
              {performance.map(([label, checked, disabled]) => (
                <Check key={label} label={label} checked={checked} disabled={disabled} />
              ))}
            </div>
          </Group>

          <Group title="褪色度控制" className="mt-[7px] h-[99px]">
            <div className="pl-2">
              <label htmlFor="xref" className="mb-px block pt-0.5 leading-4"><Song text="外部参照显示(E)" /></label>
              <div className="flex h-[21px] items-center gap-[17px]"><Field id="xref" value="50" /><Slider label="外部参照显示" value={78} /></div>
              <label htmlFor="refedit" className="mb-px block pt-[3px] leading-4"><Song text="在位编辑显示(Y)" /></label>
              <div className="flex h-[21px] items-center gap-[17px]"><Field id="refedit" value="70" /><Slider label="在位编辑显示" value={78} /></div>
            </div>
          </Group>
        </div>
      </div>

      <div className="flex justify-end gap-[13px] pb-1 pr-[47px] pt-2">
        <button type="button" className="h-[22px] w-[66px] border-2 border-[#0078d7] bg-[#e1e1e1] pt-0.5">确定</button>
        <button type="button" className={`${btn} h-[22px] w-[66px] pt-0.5`}>取消</button>
        <button type="button" disabled className="h-[22px] w-[66px] border border-[#bfbfbf] bg-[#ccc] pt-0.5 text-[#8a8a8a]"><Song text="应用(A)" /></button>
        <button type="button" className={`${btn} h-[22px] w-[66px] pt-0.5`}><Song text="帮助(H)" /></button>
      </div>
    </div>
  </div>
);

const Watermarks = () => (
  <div className="pointer-events-none fixed bottom-0 right-2.5 h-[90px] w-[252px]">
    <p className="text-xl leading-7 text-white/45">激活 Windows</p>
    <p className="whitespace-nowrap text-[15px] leading-5 text-white/45">转到“设置”以激活 Windows。</p>
    <svg className="absolute bottom-2 left-[101px]" width="46" height="42" viewBox="0 0 46 42" aria-hidden="true">
      <path d="M40 4C18 4 2 16 3 32c1-9 9-18 22-22-8 6-10 12-6 17-4-10 5-18 21-23z" fill="#1d67a8" />
      <path d="M8 39c18 2 36-6 36-18 0-5-4-8-9-7 4 6-4 17-27 25z" fill="#2f8a43" opacity=".9" />
      <path d="M16 27c6 3 15-2 15-9-5 0-12 3-15 9z" fill="#1b78b8" opacity=".8" />
    </svg>
    <p className="absolute bottom-[26px] right-0.5 whitespace-nowrap text-[21px] font-bold leading-6 text-[#1b5d9c]/80">极光下载站</p>
    <p className="absolute bottom-2 right-1 font-['Liberation_Sans',sans-serif] text-base leading-4 text-[#1d8a3c]">www.xz7.com</p>
  </div>
);

export default function App() {
  return (
    <div className={`flex h-screen flex-col overflow-hidden border border-[#9d9d9d] bg-[#323844] text-xs ${UI}`}>
      {/* Title bar */}
      <header className="flex h-[30px] shrink-0 items-center gap-[5px] bg-white pl-2 pr-4 text-[#999]">
        <AppLogo />
        <h1 className="flex-1 whitespace-nowrap"><Song text="ZWCAD 2023 试用版 (剩余 26 天) - [Drawing3.dwg]" latin="text-[13px]" /></h1>
        <div className="flex items-center gap-[34px]">
          <button type="button" aria-label="最小化窗口"><Svg size={12}><path d="M1 9h16" stroke="#888" /></Svg></button>
          <button type="button" aria-label="最大化窗口"><Svg size={12}><path d="M1.500 1.500h15v15h-15z" stroke="#888" /></Svg></button>
          <button type="button" aria-label="关闭窗口"><Svg size={12}><path d="m1 1 16 16M17 1 1 17" stroke="#888" /></Svg></button>
        </div>
      </header>
      <nav className="flex h-5 shrink-0 items-center gap-[14px] border-b border-white bg-[#2e3741] pl-[7px] text-white">
        {menus.map((m) => (
          <button key={m} type="button" className="whitespace-nowrap leading-[18px]"><Song text={m} latin="text-[13px]" /></button>
        ))}
      </nav>
      <div className="shrink-0 pl-px"><Toolbars /></div>

      {/* Work area */}
      <div className="mt-0.5 flex min-h-0 flex-1 pl-px">
        <div className={`flex min-w-0 flex-1 flex-col ${SONG}`}>
          <div className="flex min-h-0 flex-1 gap-0.5">
            <SideTools items={drawIcons} />
            <Canvas />
            <div className="mr-px flex shrink-0 self-start border-l border-[#9dabc0]"><SideTools items={modifyIcons} /></div>
          </div>
          <CommandPanel />
        </div>
        <Calculator />
        <Properties />
      </div>
      <StatusBar />

      <OptionsDialog />
      <Watermarks />
    </div>
  );
}
